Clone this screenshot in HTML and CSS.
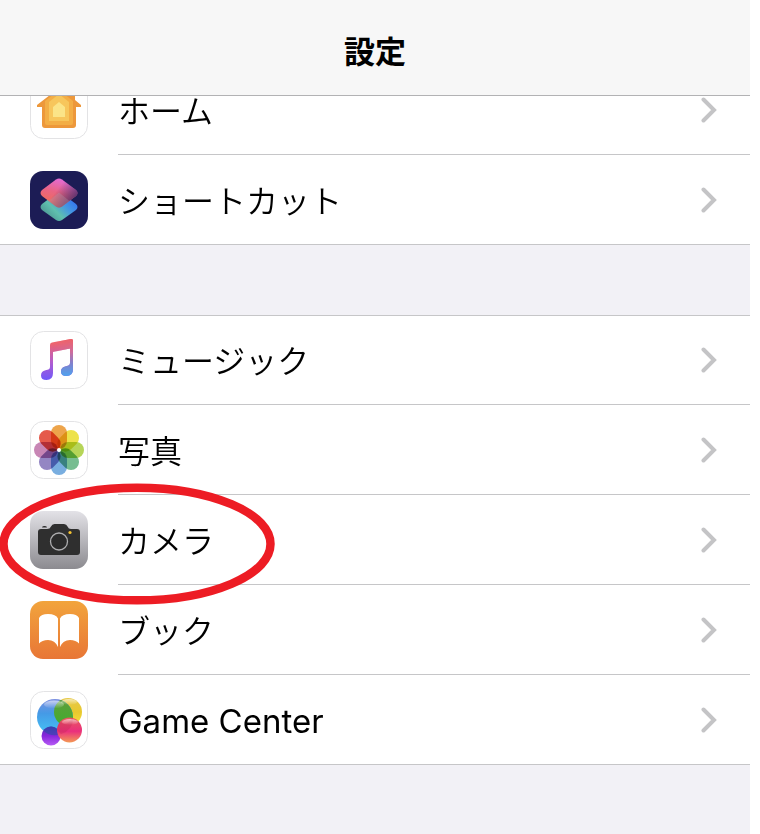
FILE: index.html
```html
<!DOCTYPE html>
<html lang="ja">
<head>
    <meta charset="UTF-8">
    <meta name="viewport" content="width=device-width, initial-scale=1.0">
    <title>設定</title>
    <link rel="stylesheet" href="styles.css">
</head>
<body>
    <svg class="defs" aria-hidden="true">
        <symbol id="chevron" viewBox="0 0 16 26">
            <path d="M2.5 2.500 L13 13 L2.500 23.500" fill="none" stroke="#c4c4c6" stroke-width="4" stroke-linecap="round" stroke-linejoin="miter"/>
        </symbol>
    </svg>
    <div class="screen">
        <header class="header">
            <h1 class="title">設定</h1>
        </header>
        <main class="content">
            <ul class="group groupFirst">
                <li class="item">
                    <a class="row" href="#home">
                        <svg class="icon" viewBox="0 0 58 58" aria-hidden="true">
                            <rect x=".5" y=".5" width="57" height="57" rx="13" fill="#fff" stroke="#e3e3e5"/>
                            <path d="M29 7 L7 24 V26 H12 V44 Q12 47 15 47 H43 Q46 47 46 44 V26 H51 V24 L45 19 V11 H40 V15 Z" fill="#ed983b"/>
                            <path d="M29 9 L15 20 V42 Q15 44 17 44 H41 Q43 44 43 42 V20 Z" fill="#f3ae46"/>
                            <path d="M29 13 L19 21 V40 H39 V21 Z" fill="#f7c65c"/>
                            <path d="M29 21 L23 26 V36 H35 V26 Z" fill="#fbe488"/>
                        </svg>
                        <span class="label">ホーム</span>
                        <svg class="chevron" aria-hidden="true"><use href="#chevron"/></svg>
                    </a>
                </li>
                <li class="item">
                    <a class="row" href="#shortcuts">
                        <svg class="icon" viewBox="0 0 58 58" aria-hidden="true">
                            <defs>
                                <linearGradient id="scLow" x1=".1" y1=".9" x2=".9" y2=".3">
                                    <stop offset="0" stop-color="#4a8f8f"/>
                                    <stop offset=".4" stop-color="#5fc0ae"/>
                                    <stop offset=".7" stop-color="#4598e2"/>
                                    <stop offset="1" stop-color="#3577f0"/>
                                </linearGradient>
                                <linearGradient id="scTop" x1=".25" y1=".9" x2=".55" y2="0">
                                    <stop offset="0" stop-color="#ef6c56"/>
                                    <stop offset=".5" stop-color="#e96484"/>
                                    <stop offset="1" stop-color="#e36bd8"/>
                                </linearGradient>
                                <linearGradient id="scShade" x1=".5" y1=".3" x2="1" y2=".6">
                                    <stop offset="0" stop-color="#3a2567" stop-opacity="0"/>
                                    <stop offset="1" stop-color="#3a2567" stop-opacity=".8"/>
                                </linearGradient>
                            </defs>
                            <rect width="58" height="58" rx="13" fill="#1c1c55"/>
                            <path d="M26 22.500 Q29 20.500 32 22.500 L46 33 Q49 36 46 39 L32 49 Q29 51 26 49 L12 39 Q9 36 12 33 Z" fill="url(#scLow)"/>
                            <path d="M26 8.500 Q29 6.500 32 8.500 L46 19 Q49 22 46 25 L32 35.500 Q29 37.500 26 35.500 L12 25 Q9 22 12 19 Z" fill="url(#scTop)"/>
                            <path d="M26 8.500 Q29 6.500 32 8.500 L46 19 Q49 22 46 25 L32 35.500 Q29 37.500 26 35.500 L12 25 Q9 22 12 19 Z" fill="url(#scShade)"/>
                            <path d="M29 21.500 L39.500 30 L32 35.500 Q29 37.500 26 35.500 L18.500 30 Z" fill="#b09cb0" opacity=".3"/>
                        </svg>
                        <span class="label">ショートカット</span>
                        <svg class="chevron" aria-hidden="true"><use href="#chevron"/></svg>
                    </a>
                </li>
            </ul>

            <ul class="group">
                <li class="item">
                    <a class="row" href="#music">
                        <svg class="icon" viewBox="0 0 58 58" aria-hidden="true">
                            <defs>
                                <linearGradient id="muL" gradientUnits="userSpaceOnUse" x1="0" y1="12" x2="0" y2="49">
                                    <stop offset="0" stop-color="#f0646c"/>
                                    <stop offset=".5" stop-color="#b45ccc"/>
                                    <stop offset="1" stop-color="#6f58fa"/>
                                </linearGradient>
                                <linearGradient id="muR" gradientUnits="userSpaceOnUse" x1="0" y1="8" x2="0" y2="45">
                                    <stop offset="0" stop-color="#ee6168"/>
                                    <stop offset=".35" stop-color="#cf6c9c"/>
                                    <stop offset=".65" stop-color="#8280cc"/>
                                    <stop offset="1" stop-color="#4fa3ee"/>
                                </linearGradient>
                                <linearGradient id="muFade" gradientUnits="userSpaceOnUse" x1="23" y1="0" x2="40" y2="0">
                                    <stop offset="0" stop-color="#000"/>
                                    <stop offset="1" stop-color="#fff"/>
                                </linearGradient>
                                <mask id="muMask" maskUnits="userSpaceOnUse" x="0" y="0" width="58" height="58">
                                    <rect width="58" height="30" fill="url(#muFade)"/>
                                    <rect x="29" y="29" width="29" height="29" fill="#fff"/>
                                </mask>
                            </defs>
                            <rect x=".5" y=".5" width="57" height="57" rx="13" fill="#fff" stroke="#e3e3e5"/>
                            <path d="M20 14 Q20 12 22 11.600 L41 8 Q43 7.600 43 9.500 V38 Q43 45 36.500 45 Q31 45 31 40.500 Q31 36 36 35.200 Q40 34.800 40 32 V17.600 L23 21 V42 Q23 49 16.500 49 Q11 49 11 44.500 Q11 40 15.500 39.200 Q20 38.800 20 36 Z" fill="url(#muL)"/>
                            <path d="M20 14 Q20 12 22 11.600 L41 8 Q43 7.600 43 9.500 V38 Q43 45 36.500 45 Q31 45 31 40.500 Q31 36 36 35.200 Q40 34.800 40 32 V17.600 L23 21 Z" fill="url(#muR)" mask="url(#muMask)"/>
                        </svg>
                        <span class="label">ミュージック</span>
                        <svg class="chevron" aria-hidden="true"><use href="#chevron"/></svg>
                    </a>
                </li>
                <li class="item">
                    <a class="row" href="#photos">
                        <svg class="icon" viewBox="0 0 58 58" aria-hidden="true">
                            <rect x=".5" y=".5" width="57" height="57" rx="13" fill="#fff" stroke="#e3e3e5"/>
                            <g class="petals">
                                <rect x="21" y="4" width="16" height="24" rx="8" fill="#eda44b"/>
                                <rect x="21" y="4" width="16" height="24" rx="8" fill="#ede24b" transform="rotate(45 29 29)"/>
                                <rect x="21" y="4" width="16" height="24" rx="8" fill="#b6d558" transform="rotate(90 29 29)"/>
                                <rect x="21" y="4" width="16" height="24" rx="8" fill="#77bd91" transform="rotate(135 29 29)"/>
                                <rect x="21" y="4" width="16" height="24" rx="8" fill="#79aee0" transform="rotate(180 29 29)"/>
                                <rect x="21" y="4" width="16" height="24" rx="8" fill="#9486c3" transform="rotate(225 29 29)"/>
                                <rect x="21" y="4" width="16" height="24" rx="8" fill="#c886b5" transform="rotate(270 29 29)"/>
                                <rect x="21" y="4" width="16" height="24" rx="8" fill="#e5594b" transform="rotate(315 29 29)"/>
                            </g>
                            <circle cx="29" cy="29" r="2" fill="#fff"/>
                        </svg>
                        <span class="label">写真</span>
                        <svg class="chevron" aria-hidden="true"><use href="#chevron"/></svg>
                    </a>
                </li>
                <li class="item">
                    <a class="row" href="#camera">
                        <svg class="icon" viewBox="0 0 58 58" aria-hidden="true">
                            <defs>
                                <linearGradient id="camBg" x1="0" y1="0" x2="0" y2="1">
                                    <stop offset="0" stop-color="#e3e2e7"/>
                                    <stop offset="1" stop-color="#8c8b90"/>
                                </linearGradient>
                            </defs>
                            <rect width="58" height="58" rx="13" fill="url(#camBg)"/>
                            <path d="M12 16.500 Q12 15 14 15 H15 Q17 15 17 16.500 Z" fill="#2f2f2f"/>
                            <path d="M11 18 H17 Q20 18 21 15.500 Q22 13 24.500 13 H34 Q36.500 13 37.500 15.500 Q38.500 18 41 18 H47 Q50 18 50 21 V41 Q50 44 47 44 H11 Q8 44 8 41 V21 Q8 18 11 18 Z" fill="#2f2f2f"/>
                            <circle cx="29" cy="30.500" r="8.500" fill="#2b2b2b" stroke="#aeaeb0" stroke-width="1.300"/>
                            <circle cx="40" cy="21.500" r="1.600" fill="#f5c431"/>
                        </svg>
                        <span class="label">カメラ</span>
                        <svg class="chevron" aria-hidden="true"><use href="#chevron"/></svg>
                    </a>
                    <!-- red circle around the camera row -->
                    <svg class="mark" viewBox="0 0 276 122" aria-hidden="true">
                        <ellipse cx="138" cy="61" rx="133.500" ry="56.300" fill="none" stroke="#ed1c24" stroke-width="8.500"/>
                    </svg>
                </li>
                <li class="item">
                    <a class="row" href="#books">
                        <svg class="icon" viewBox="0 0 58 58" aria-hidden="true">
                            <defs>
                                <linearGradient id="bkBg" x1="0" y1="0" x2="0" y2="1">
                                    <stop offset="0" stop-color="#f2a43c"/>
                                    <stop offset="1" stop-color="#e87636"/>
                                </linearGradient>
                            </defs>
                            <rect width="58" height="58" rx="13" fill="url(#bkBg)"/>
                            <path d="M9 17 Q11 13 18 13 Q26 13 28 17.500 V46 Q25 39 18 39 Q12 39 9 42.500 Z" fill="#fff"/>
                            <path d="M49 17 Q47 13 40 13 Q32 13 30 17.500 V46 Q33 39 40 39 Q46 39 49 42.500 Z" fill="#fff"/>
                        </svg>
                        <span class="label">ブック</span>
                        <svg class="chevron" aria-hidden="true"><use href="#chevron"/></svg>
                    </a>
                </li>
                <li class="item">
                    <a class="row" href="#gamecenter">
                        <svg class="icon" viewBox="0 0 58 58" aria-hidden="true">
                            <defs>
                                <linearGradient id="gcBlue" x1="0" y1="0" x2="0" y2="1">
                                    <stop offset="0" stop-color="#7c8fe0"/>
                                    <stop offset=".4" stop-color="#459ae6"/>
                                    <stop offset="1" stop-color="#45c6f6"/>
                                </linearGradient>
                                <linearGradient id="gcYellow" x1="0" y1="0" x2="0" y2="1">
                                    <stop offset="0" stop-color="#e6c94a"/>
                                    <stop offset=".5" stop-color="#e8c82e"/>
                                    <stop offset="1" stop-color="#f6e33f"/>
                                </linearGradient>
                                <linearGradient id="gcGreen" x1="0" y1="0" x2="0" y2="1">
                                    <stop offset="0" stop-color="#5f9d3c"/>
                                    <stop offset="1" stop-color="#41ad2e"/>
                                </linearGradient>
                                <linearGradient id="gcPink" x1="0" y1="0" x2="0" y2="1">
                                    <stop offset="0" stop-color="#e85b5c"/>
                                    <stop offset=".55" stop-color="#ea2f7d"/>
                                    <stop offset="1" stop-color="#f49a54"/>
                                </linearGradient>
                                <linearGradient id="gcPurple" x1="0" y1="0" x2="0" y2="1">
                                    <stop offset="0" stop-color="#5030b4"/>
                                    <stop offset=".5" stop-color="#8926dc"/>
                                    <stop offset="1" stop-color="#b65cf5"/>
                                </linearGradient>
                                <linearGradient id="gcShine" x1="0" y1="0" x2="0" y2="1">
                                    <stop offset="0" stop-color="#fff" stop-opacity=".6"/>
                                    <stop offset="1" stop-color="#fff" stop-opacity="0"/>
                                </linearGradient>
                                <clipPath id="gcClip"><circle cx="25" cy="26" r="18"/></clipPath>
                            </defs>
                            <rect x=".5" y=".5" width="57" height="57" rx="13" fill="#fff" stroke="#e3e3e5"/>
                            <circle cx="38" cy="21" r="14" fill="url(#gcYellow)"/>
                            <circle cx="25" cy="26" r="18" fill="url(#gcBlue)"/>
                            <circle cx="38" cy="21" r="14" fill="url(#gcGreen)" clip-path="url(#gcClip)"/>
                            <ellipse cx="24" cy="13.500" rx="10" ry="4" fill="url(#gcShine)"/>
                            <ellipse cx="39" cy="11" rx="8" ry="3" fill="url(#gcShine)"/>
                            <circle cx="21" cy="45" r="9.500" fill="url(#gcPurple)"/>
                            <path d="M13.800 39 Q17 35 22 35.500 Q28 36 30 43.500 Q20 46 13.800 40 Z" fill="#294ca8" opacity=".6"/>
                            <circle cx="39.500" cy="39" r="12.500" fill="url(#gcPink)"/>
                            <path d="M27 39 A12.500 12.500 0 0 1 30 31 Q37 36 42 27 L43 28 Q43 39 31 43 Z" fill="#c42c52" opacity=".35"/>
                            <ellipse cx="40" cy="31" rx="8" ry="3" fill="url(#gcShine)"/>
                        </svg>
                        <span class="label labelLatin">Game Center</span>
                        <svg class="chevron" aria-hidden="true"><use href="#chevron"/></svg>
                    </a>
                </li>
            </ul>
        </main>
    </div>
</body>
</html>
```

FILE: styles.css
```css
* {
    box-sizing: border-box;
}
body {
    margin: 0;
    background-color: #fff;
    color: #000;
    font-family: "Noto Sans CJK JP", sans-serif;
}
.defs {
    display: none;
}
.screen {
    margin-right: 10px;
    min-height: 100vh;
    background-color: #f2f1f6;
    overflow: hidden;
}
.header {
    position: sticky;
    top: 0;
    z-index: 1;
    display: flex;
    align-items: center;
    justify-content: center;
    height: 96px;
    padding-top: 4px;
    background-color: #f7f7f7;
    border-bottom: 1px solid #b2b2b4;
}
.title {
    margin: 0;
    font-size: 31px;
    line-height: 40px;
    font-weight: 700;
}
.group {
    list-style: none;
    margin: 0 0 70px;
    padding: 0;
    background-color: #fff;
    box-shadow: inset 0 1px #c6c6c8, inset 0 -1px #c6c6c8;
}
/* the list is scrolled a little under the header */
.groupFirst {
    margin-top: -31px;
}
.item {
    position: relative;
}
.row {
    display: flex;
    align-items: center;
    padding-left: 30px;
    color: inherit;
    text-decoration: none;
}
.icon {
    flex: none;
    width: 58px;
    height: 58px;
    margin: 16px 30px 16px 0;
}
.petals rect {
    mix-blend-mode: multiply;
}
.label {
    flex: 1;
    padding-bottom: 2px;
    font-size: 32px;
    line-height: 88px;
    font-weight: 350;
}
.labelLatin {
    padding: 2px 0 0;
    font-family: Inter, sans-serif;
    font-size: 33px;
    font-weight: 400;
}
.chevron {
    flex: none;
    width: 16px;
    height: 26px;
    margin-right: 33px;
}
.item:not(:last-child)::after {
    content: "";
    display: block;
    height: 1px;
    margin: -1px 0 0 118px;
    background-color: #c6c6c8;
}
.mark {
    position: absolute;
    left: -1px;
    top: -12px;
    z-index: 1;
    width: 276px;
    height: 122px;
    pointer-events: none;
}
```
